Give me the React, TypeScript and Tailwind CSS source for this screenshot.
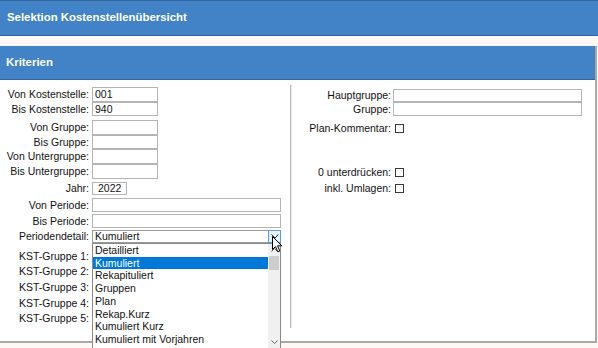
import React from "react";

function LRow({ label, mt, h, w = 66, value, pl = 2 }: { label: string; mt: number; h: number; w?: number; value?: string; pl?: number }) {
  return (
    <div className="flex items-stretch" style={{ marginTop: mt, height: h }}>
      <div className="w-[89px] text-right flex items-center justify-end leading-none whitespace-nowrap">{label}</div>
      <div
        className="ml-[3px] border border-[#b4b4b4] bg-white flex items-center leading-none"
        style={{ width: w, paddingLeft: pl }}
      >
        {value}
      </div>
    </div>
  );
}

function LLabel({ label, mt, h }: { label: string; mt: number; h: number }) {
  return (
    <div className="flex items-stretch" style={{ marginTop: mt, height: h }}>
      <div className="w-[89px] text-right flex items-center justify-end leading-none whitespace-nowrap">{label}</div>
    </div>
  );
}

function RRow({ label, mt, h }: { label: string; mt: number; h: number }) {
  return (
    <div className="flex items-stretch" style={{ marginTop: mt, height: h }}>
      <div className="w-[99px] text-right flex items-center justify-end leading-none whitespace-nowrap">{label}</div>
      <div className="ml-[2px] w-[189px] border border-[#b4b4b4] bg-white" />
    </div>
  );
}

function CRow({ label, mt, h }: { label: string; mt: number; h: number }) {
  return (
    <div className="flex items-center" style={{ marginTop: mt, height: h }}>
      <div className="w-[99px] text-right leading-none whitespace-nowrap">{label}</div>
      <div className="ml-[4px] w-[9px] h-[9px] border border-[#3a3a3a] bg-white" />
    </div>
  );
}

const options = [
  "Detailliert",
  "Kumuliert",
  "Rekapituliert",
  "Gruppen",
  "Plan",
  "Rekap.Kurz",
  "Kumuliert Kurz",
  "Kumuliert mit Vorjahren",
];

export default function App() {
  return (
    <div className="relative w-[598px] h-[348px] overflow-hidden bg-[#fdf8f5] text-[10.5px] text-[#111] font-['Liberation_Sans',Arial,sans-serif]">
      <div className="h-[36px] bg-[#4282c7] border-t border-b border-[#35679c] flex items-center pl-[7px] text-white font-bold text-[11.4px]">
        Selektion Kostenstellenübersicht
      </div>
      <div className="h-[10px]" />
      <div className="w-[597px] h-[297px] bg-white border-r-2 border-b-2 border-[#a9a9a9] flex flex-col">
        <div className="h-[34px] bg-[#4282c7] border-b border-[#35679c] flex items-center pl-[6px] text-white font-bold text-[11.4px]">
          Kriterien
        </div>
        <div className="flex flex-1">
          <div className="w-[290px] flex flex-col">
            <LRow label="Von Kostenstelle:" mt={7} h={15} value="001" />
            <LRow label="Bis Kostenstelle:" mt={0} h={14} value="940" />
            <LRow label="Von Gruppe:" mt={4} h={15} />
            <LRow label="Bis Gruppe:" mt={0} h={14} />
            <LRow label="Von Untergruppe:" mt={0} h={15} />
            <LRow label="Bis Untergruppe:" mt={0} h={15} />
            <LRow label="Jahr:" mt={3} h={13} w={35} value="2022" pl={5} />
            <LRow label="Von Periode:" mt={3} h={14} w={189} />
            <LRow label="Bis Periode:" mt={2} h={14} w={189} />
            <div className="flex items-stretch mt-[2px] h-[13px]">
              <div className="w-[89px] text-right flex items-center justify-end leading-none">Periodendetail:</div>
              <div className="ml-[3px] w-[189px] border border-[#9a9a9a] bg-white flex items-center justify-between leading-none pl-[2px]">
                <span>Kumuliert</span>
                <div className="w-[13px] h-[13px] -mr-px -mt-px -mb-px border border-[#569de5] bg-[#e5f1fb] flex items-center justify-center">
                  <svg width="8" height="5" viewBox="0 0 8 5">
                    <path d="M0.5 0.5 L4 4 L7.5 0.5" fill="none" stroke="#222" strokeWidth="1" />
                  </svg>
                </div>
              </div>
            </div>
            <LLabel label="KST-Gruppe 1:" mt={6} h={15} />
            <LLabel label="KST-Gruppe 2:" mt={0} h={15} />
            <LLabel label="KST-Gruppe 3:" mt={0} h={16} />
            <LLabel label="KST-Gruppe 4:" mt={0} h={16} />
            <LLabel label="KST-Gruppe 5:" mt={0} h={15} />
          </div>
          <div className="mt-[5px] h-[243px] w-[2px] border-l border-[#b9b9b9] bg-[#e8e8e8]" />
          <div className="flex-1 flex flex-col">
            <RRow label="Hauptgruppe:" mt={9} h={13} />
            <RRow label="Gruppe:" mt={0} h={14} />
            <CRow label="Plan-Kommentar:" mt={5} h={15} />
            <CRow label="0 unterdrücken:" mt={29} h={15} />
            <CRow label="inkl. Umlagen:" mt={1} h={15} />
          </div>
        </div>
      </div>

      {/* dropdown list overlay */}
      <div className="absolute left-[92px] top-[243px] w-[189px] h-[106px] border border-[#8a8a8a] bg-white flex">
        <div className="flex-1 flex flex-col">
          {options.map((o) => (
            <div
              key={o}
              className={
                "h-[12.7px] flex items-center pl-[2px] leading-none whitespace-nowrap " +
                (o === "Kumuliert" ? "bg-[#0078d7] text-white" : "")
              }
            >
              {o}
            </div>
          ))}
        </div>
        <div className="w-[12px] bg-[#f0f0f0] flex flex-col">
          <div className="h-[12px] flex items-center justify-center">
            <svg width="7" height="4" viewBox="0 0 7 4">
              <path d="M0.5 3.5 L3.5 0.5 L6.5 3.5" fill="none" stroke="#606060" strokeWidth="1" />
            </svg>
          </div>
          <div className="mx-[1px] h-[14px] bg-[#cdcdcd]" />
          <div className="flex-1" />
          <div className="h-[12px] flex items-center justify-center">
            <svg width="7" height="4" viewBox="0 0 7 4">
              <path d="M0.5 0.5 L3.5 3.5 L6.5 0.5" fill="none" stroke="#606060" strokeWidth="1" />
            </svg>
          </div>
        </div>
      </div>

      {/* mouse cursor */}
      <svg className="absolute left-[272px] top-[236px]" width="12" height="18" viewBox="0 0 12 18">
        <path
          d="M0.5 0.5 L0.5 13.5 L3.5 10.5 L5.8 15.8 L7.8 15 L5.6 9.8 L9.8 9.8 Z"
          fill="#fff"
          stroke="#000"
          strokeWidth="1"
          strokeLinejoin="round"
        />
      </svg>
    </div>
  );
}
